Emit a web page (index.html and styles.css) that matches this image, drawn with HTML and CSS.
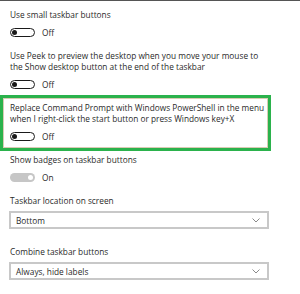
FILE: index.html
```html
<!DOCTYPE html>
<html>
<head>
<meta charset="utf-8">
<link rel="stylesheet" href="styles.css">
</head>
<body>
<div class="page">
  <div class="setting s1">
    <div class="label">Use small taskbar buttons</div>
    <div class="toggle-row"><span class="toggle off"><span class="dot"></span></span><span class="state">Off</span></div>
  </div>
  <div class="setting s2">
    <div class="label">Use Peek to preview the desktop when you move your mouse to<br>the Show desktop button at the end of the taskbar</div>
    <div class="toggle-row"><span class="toggle off"><span class="dot"></span></span><span class="state">Off</span></div>
  </div>
  <div class="highlight">
    <div class="label">Replace Command Prompt with Windows PowerShell in the menu<br>when I right-click the start button or press Windows key+X</div>
    <div class="toggle-row"><span class="toggle off"><span class="dot"></span></span><span class="state">Off</span></div>
  </div>
  <div class="setting s4">
    <div class="label">Show badges on taskbar buttons</div>
    <div class="toggle-row"><span class="toggle on-disabled"><span class="dot"></span></span><span class="state">On</span></div>
  </div>
  <div class="setting s5">
    <div class="label">Taskbar location on screen</div>
    <div class="select"><span>Bottom</span><svg class="chev" width="8" height="5" viewBox="0 0 8 5"><path d="M0.5 0.5 L4 4 L7.5 0.5" fill="none" stroke="#8a8a8a" stroke-width="1"/></svg></div>
  </div>
  <div class="setting s6">
    <div class="label">Combine taskbar buttons</div>
    <div class="select"><span>Always, hide labels</span><svg class="chev" width="8" height="5" viewBox="0 0 8 5"><path d="M0.5 0.5 L4 4 L7.5 0.5" fill="none" stroke="#8a8a8a" stroke-width="1"/></svg></div>
  </div>
</div>
</body>
</html>
```
FILE: styles.css
```css
html, body {
  margin: 0;
  padding: 0;
  background: #fff;
}
body {
  width: 300px;
  height: 294px;
  overflow: hidden;
  border-top: 1px solid #555;
  box-sizing: border-box;
  font-family: "Open Sans", "Noto Sans", sans-serif;
  font-size: 8.3px;
  line-height: 11px;
  color: #2a2a2a;
}
.page {
  display: flex;
  flex-direction: column;
}
.setting {
  padding-left: 10px;
}
.label {
  white-space: nowrap;
}
.s1 { margin-top: 8px; }
.s2 { margin-top: 12px; }
.toggle-row {
  display: flex;
  align-items: center;
  gap: 7px;
  margin-top: 6px;
  height: 12px;
}
.toggle {
  width: 25px;
  height: 9px;
  border-radius: 5px;
  box-sizing: border-box;
  display: flex;
  align-items: center;
  padding: 0 1px;
}
.toggle.off {
  border: 1.5px solid #1a1a1a;
}
.toggle.off .dot {
  width: 5px;
  height: 5px;
  border-radius: 50%;
  background: #1a1a1a;
}
.toggle.on-disabled {
  background: #c6c6c6;
  justify-content: flex-end;
  padding: 0 2px;
}
.toggle.on-disabled .dot {
  width: 5px;
  height: 5px;
  border-radius: 50%;
  background: #fff;
}
.highlight {
  margin-top: 5px;
  width: 271px;
  box-sizing: border-box;
  border: 3px solid #2bb24c;
  box-shadow: inset 0 0 0 1px #d9cbb4;
  padding: 4px 0 6px 7px;
}
.s4 { margin-top: 3px; }
.s5 { margin-top: 12px; }
.s6 { margin-top: 17px; }
.select {
  margin-top: 5px;
  margin-left: -1px;
  width: 260px;
  height: 18px;
  box-sizing: border-box;
  border: 2px solid #c8c8c8;
  display: flex;
  align-items: center;
  justify-content: space-between;
  padding: 0 7px 0 5px;
}
.chev {
  display: block;
}
```
